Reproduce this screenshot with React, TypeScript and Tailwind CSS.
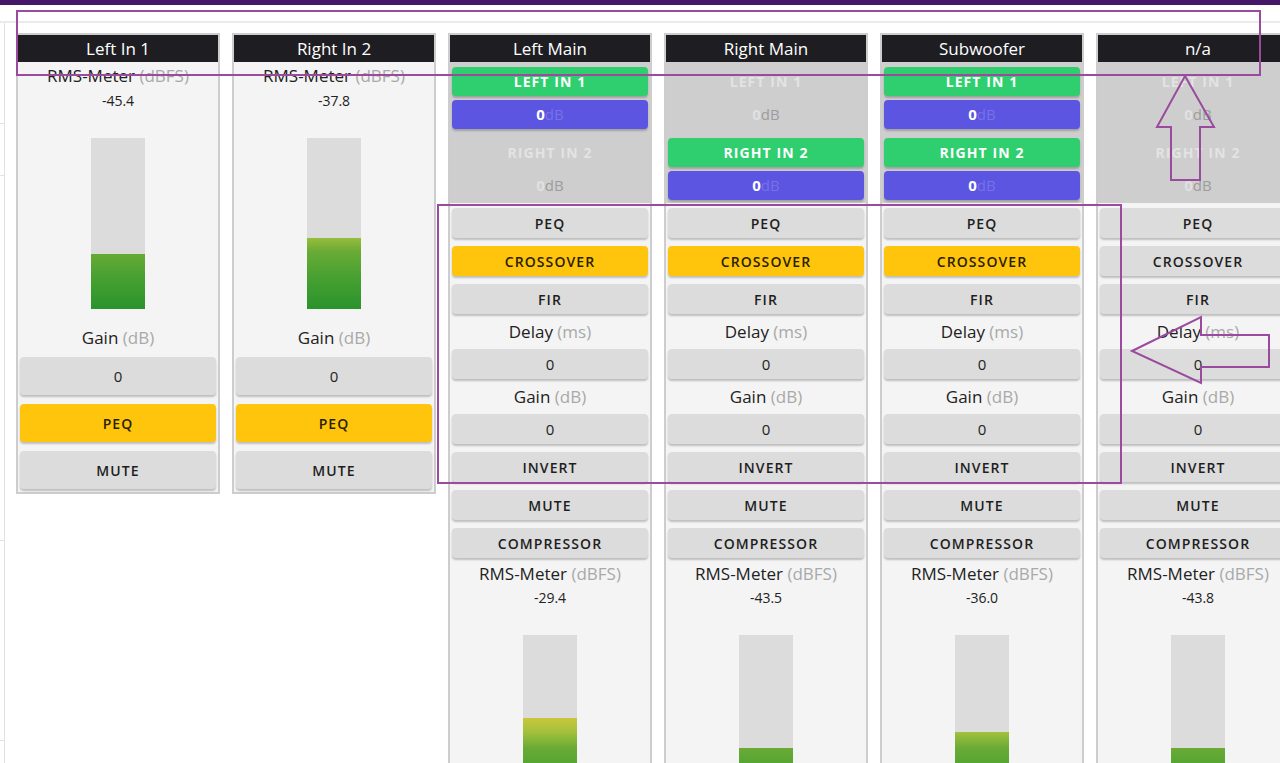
import React from "react";

type Tone = "gray" | "yellow" | "green" | "blue";

const toneClass: Record<Tone, string> = {
  gray: "bg-[#dcdcdc] text-[#1e1e1e]",
  yellow: "bg-[#fec50c] text-[#2a2100]",
  green: "bg-[#2fcf6f] text-white",
  blue: "bg-[#5b55e1] text-white",
};

const Btn = ({
  children,
  tone = "gray",
  size = "h-[30px]",
  caps = true,
}: {
  children: React.ReactNode;
  tone?: Tone;
  size?: string;
  caps?: boolean;
}) => (
  <div
    className={`${size} w-full shrink-0 flex items-center justify-center rounded-[4px] shadow-[0_2px_2px_rgba(0,0,0,0.22)] ${toneClass[tone]} ${
      caps ? "text-[14px] font-semibold tracking-[1.1px] uppercase" : "text-[15px] font-medium"
    }`}
  >
    {children}
  </div>
);

const Label = ({ main, unit }: { main: string; unit: string }) => (
  <div className="h-[19px] leading-[19px] text-[17px] text-[#222] text-center whitespace-nowrap">
    {main} <span className="text-[#a9a9a9]">({unit})</span>
  </div>
);

const Meter = ({ fill, className }: { fill: number; className: string }) => (
  <div className={`relative w-[54px] h-[171px] bg-[#dcdcdc] overflow-hidden ${className}`}>
    <div className="absolute bottom-0 left-0 right-0 overflow-hidden" style={{ height: fill }}>
      <div className="absolute bottom-0 left-0 w-full h-[171px] bg-[linear-gradient(to_top,#2a932c_0px,#46a031_30px,#6aab36_58px,#a2c13c_74px,#d0c93a_90px,#e6c33a_171px)]" />
    </div>
  </div>
);

const Header = ({ name }: { name: string }) => (
  <div className="h-[27px] bg-[#1e1e22] text-white text-[17px] leading-[27px] text-center">{name}</div>
);

const inputs = [
  { name: "Left In 1", value: "-45.4", fill: 55 },
  { name: "Right In 2", value: "-37.8", fill: 71 },
];

const outputs = [
  { name: "Left Main", routes: [true, false], crossover: true, value: "-29.4", fill: 88 },
  { name: "Right Main", routes: [false, true], crossover: true, value: "-43.5", fill: 58 },
  { name: "Subwoofer", routes: [true, true], crossover: true, value: "-36.0", fill: 74 },
  { name: "n/a", routes: [false, false], crossover: false, value: "-43.8", fill: 58 },
];

const InputStrip = ({ name, value, fill }: { name: string; value: string; fill: number }) => (
  <div className="w-[204px] shrink-0 border-2 border-[#cdcdcd] bg-[#f4f4f4]">
    <Header name={name} />
    <div className="flex flex-col items-center px-[2px] pb-[3px]">
      <div className="mt-[4px]">
        <Label main="RMS-Meter" unit="dBFS" />
      </div>
      <div className="mt-[8px] text-[14px] leading-[16px] text-[#222]">{value}</div>
      <Meter fill={fill} className="mt-[29px]" />
      <div className="mt-[19px]">
        <Label main="Gain" unit="dB" />
      </div>
      <div className="mt-[10px] w-full flex flex-col gap-[9px]">
        <Btn size="h-[38px]" caps={false}>0</Btn>
        <Btn size="h-[38px]" tone="yellow">PEQ</Btn>
        <Btn size="h-[38px]">MUTE</Btn>
      </div>
    </div>
  </div>
);

const Route = ({ label, on }: { label: string; on: boolean }) => (
  <div className="flex flex-col gap-[4px]">
    {on ? (
      <Btn tone="green" size="h-[29px]">
        <span className="font-bold">{label}</span>
      </Btn>
    ) : (
      <div className="h-[29px] flex items-center justify-center text-[14px] font-bold tracking-[1.1px] text-[#e3e3e3]">
        {label}
      </div>
    )}
    {on ? (
      <Btn tone="blue" size="h-[29px]" caps={false}>
        <span className="font-bold">0</span>
        <span className="font-normal text-[#7771e6]">dB</span>
      </Btn>
    ) : (
      <div className="h-[29px] flex items-center justify-center text-[15px]">
        <span className="font-bold text-[#e0e0e0]">0</span>
        <span className="text-[#9c9c9c]">dB</span>
      </div>
    )}
  </div>
);

const OutputStrip = ({
  name,
  routes,
  crossover,
  value,
  fill,
}: {
  name: string;
  routes: boolean[];
  crossover: boolean;
  value: string;
  fill: number;
}) => (
  <div className="w-[204px] shrink-0 border-2 border-[#cdcdcd] bg-[#f4f4f4]">
    <Header name={name} />
    <div className="bg-[#cecece] pt-[5px] pb-[3px] px-[2px] flex flex-col gap-[9px]">
      <Route label="LEFT IN 1" on={routes[0]} />
      <Route label="RIGHT IN 2" on={routes[1]} />
    </div>
    <div className="px-[2px] pt-[5px] flex flex-col gap-[8px]">
      <Btn>PEQ</Btn>
      <Btn tone={crossover ? "yellow" : "gray"}>CROSSOVER</Btn>
      <Btn>FIR</Btn>
      <Label main="Delay" unit="ms" />
      <Btn caps={false}>0</Btn>
      <Label main="Gain" unit="dB" />
      <Btn caps={false}>0</Btn>
      <Btn>INVERT</Btn>
      <Btn>MUTE</Btn>
      <Btn>COMPRESSOR</Btn>
      <div className="flex flex-col items-center -mt-[2px]">
        <Label main="RMS-Meter" unit="dBFS" />
        <div className="mt-[7px] text-[14px] leading-[16px] text-[#222]">{value}</div>
        <Meter fill={fill} className="mt-[29px]" />
      </div>
    </div>
  </div>
);

export default function App() {
  return (
    <div className="relative w-[1280px] h-[763px] overflow-hidden bg-white font-['Open_Sans',sans-serif]">
      <div className="h-[5px] bg-[#441769]" />
      <div className="h-[18px] border-b-2 border-[#ebebeb]" />
      <div className="flex">
        <aside className="w-[5px] h-[760px] shrink-0 border-r border-[#e0e0e0] flex flex-col">
          <div className="h-[101px] border-b border-[#e4e4e4]" />
          <div className="h-[52px] border-b border-[#e4e4e4]" />
          <div className="h-[365px] border-b border-[#e4e4e4]" />
          <div className="h-[200px] border-b border-[#e4e4e4]" />
        </aside>
        <main className="pl-[11px] pt-[10px] flex gap-[12px] items-start">
          {inputs.map((s) => (
            <InputStrip key={s.name} {...s} />
          ))}
          {outputs.map((s) => (
            <OutputStrip key={s.name} {...s} />
          ))}
        </main>
      </div>
      <svg className="absolute inset-0 pointer-events-none" width="1280" height="763" viewBox="0 0 1280 763">
        <g fill="none" stroke="#9a4b9e" strokeWidth="2">
          <rect x="17" y="11" width="1243" height="64" />
          <rect x="438" y="205" width="683" height="278" />
          <polygon points="1185,76 1214,127 1200,127 1200,180 1171,180 1171,127 1157,127" />
          <polygon points="1132,351 1201,317 1201,335 1269,335 1269,367 1201,367 1201,383" />
        </g>
      </svg>
    </div>
  );
}
